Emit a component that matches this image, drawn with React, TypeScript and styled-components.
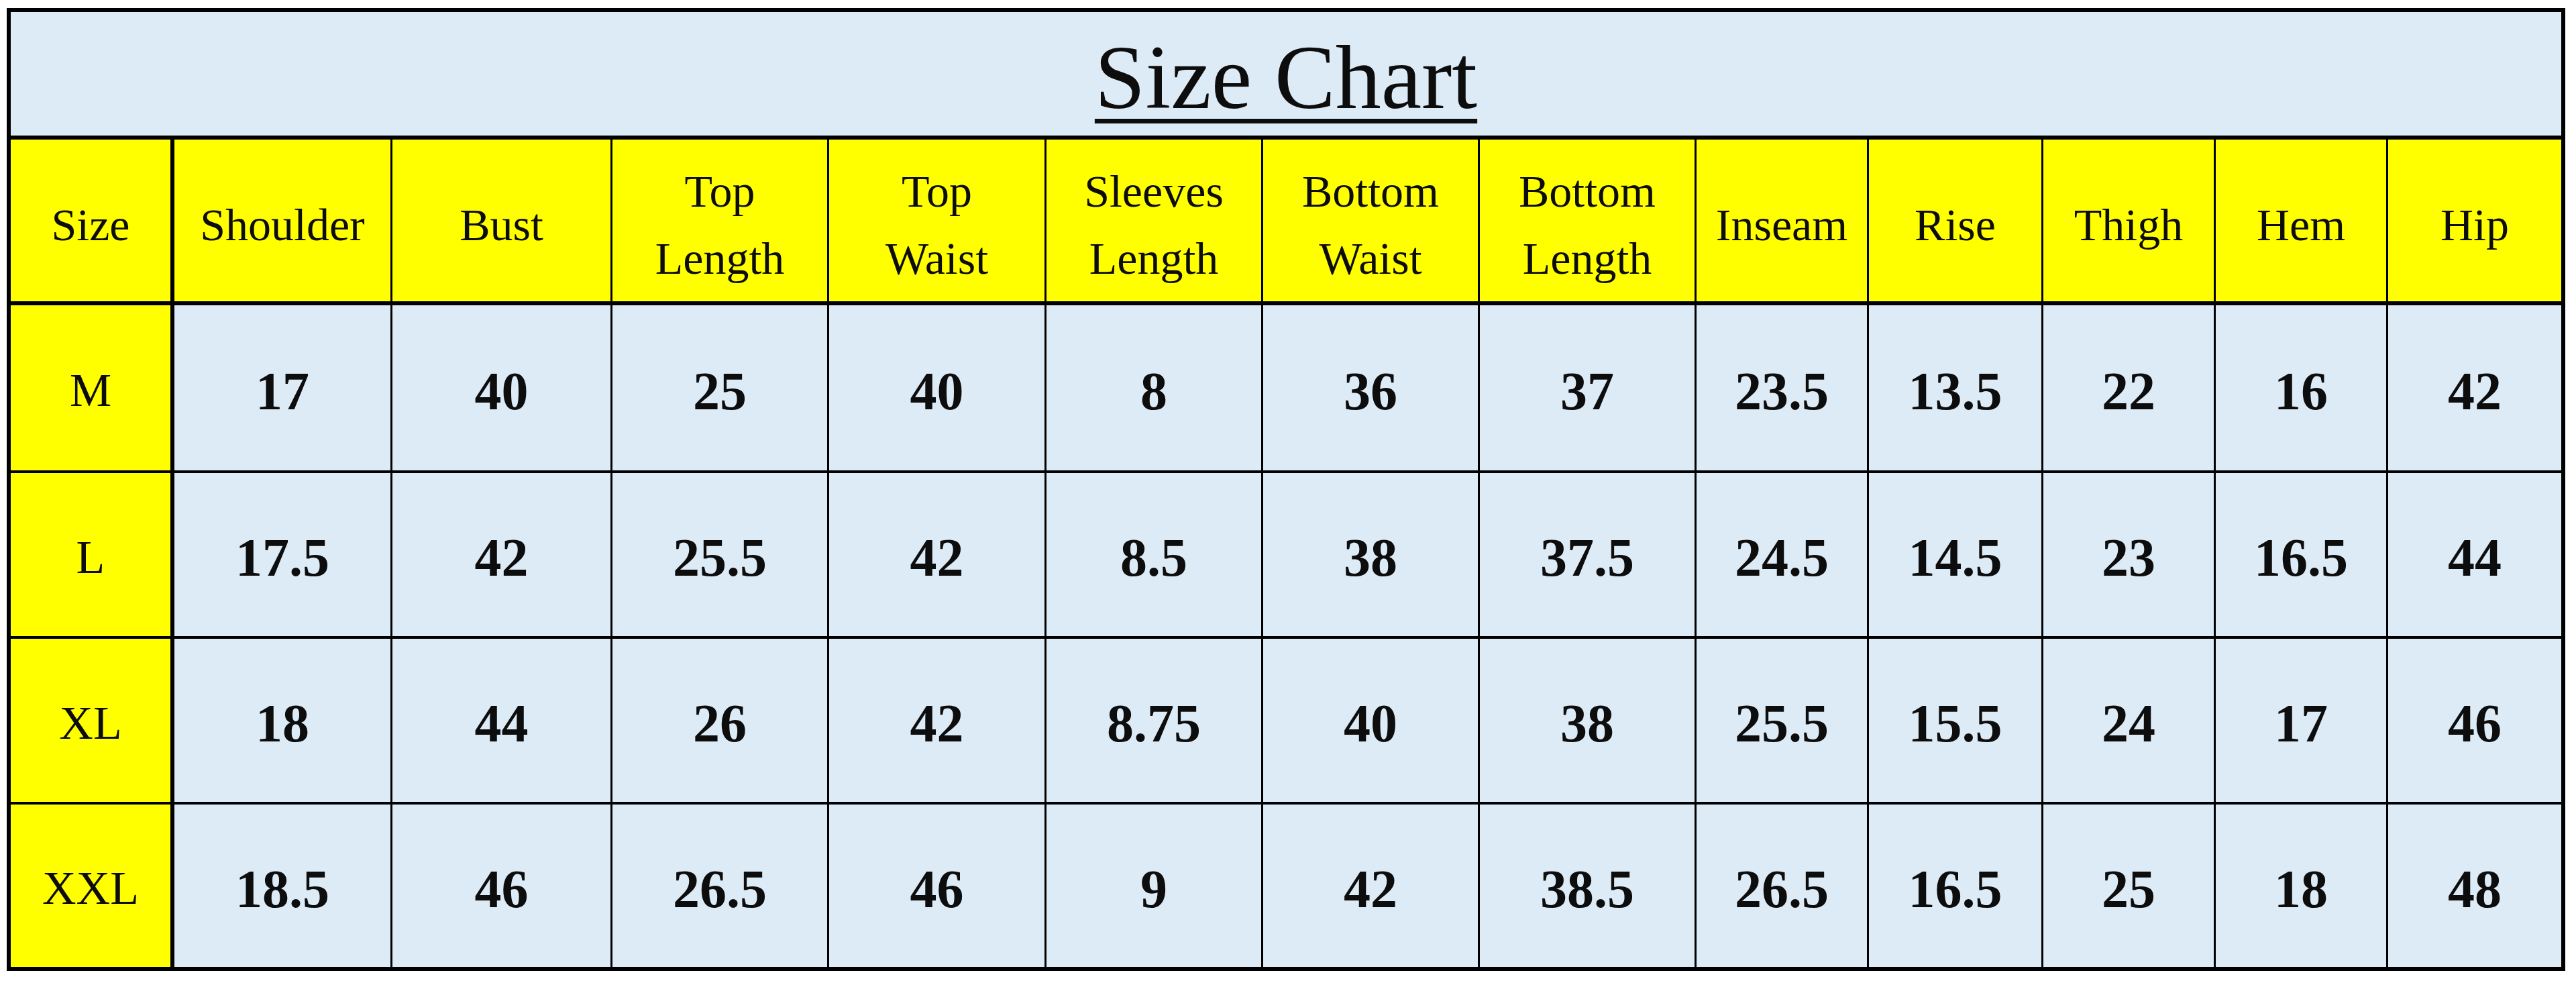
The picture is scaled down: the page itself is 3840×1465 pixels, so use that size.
import styled, { createGlobalStyle } from 'styled-components';

const COLUMNS = [244, 325, 328, 323, 324, 323, 323, 323, 257, 260, 257, 257, 258];
const ROWS = [190, 247, 250, 247, 247, 242];

const HEADERS: string[][] = [
  ['Size'],
  ['Shoulder'],
  ['Bust'],
  ['Top', 'Length'],
  ['Top', 'Waist'],
  ['Sleeves', 'Length'],
  ['Bottom', 'Waist'],
  ['Bottom', 'Length'],
  ['Inseam'],
  ['Rise'],
  ['Thigh'],
  ['Hem'],
  ['Hip'],
];

const SIZES: { size: string; values: string[] }[] = [
  { size: 'M', values: ['17', '40', '25', '40', '8', '36', '37', '23.5', '13.5', '22', '16', '42'] },
  { size: 'L', values: ['17.5', '42', '25.5', '42', '8.5', '38', '37.5', '24.5', '14.5', '23', '16.5', '44'] },
  { size: 'XL', values: ['18', '44', '26', '42', '8.75', '40', '38', '25.5', '15.5', '24', '17', '46'] },
  { size: 'XXL', values: ['18.5', '46', '26.5', '46', '9', '42', '38.5', '26.5', '16.5', '25', '18', '48'] },
];

function App() {
  return (
    <>
      <GlobalStyle />
      <Page>
        <Chart>
          <TitleCell>
            <Title>Size Chart</Title>
          </TitleCell>

          {HEADERS.map((lines, i) => (
            <HeadCell key={lines.join('-')} $first={i === 0} $last={i === HEADERS.length - 1}>
              <HeadText>
                {lines.map((line, j) => (
                  <span key={line}>
                    {j > 0 && <br />}
                    {line}
                  </span>
                ))}
              </HeadText>
            </HeadCell>
          ))}

          {SIZES.map((row, r) => {
            const lastRow = r === SIZES.length - 1;
            return [
              <SizeCell key={row.size} $lastRow={lastRow}>
                {row.size}
              </SizeCell>,
              ...row.values.map((value, c) => (
                <ValueCell
                  key={`${row.size}-${c}`}
                  $lastRow={lastRow}
                  $last={c === row.values.length - 1}
                >
                  {value}
                </ValueCell>
              )),
            ];
          })}
        </Chart>
      </Page>
    </>
  );
}

const GlobalStyle = createGlobalStyle`
  html, body {
    margin: 0;
    padding: 0;
    background: #ffffff;
  }

  body {
    font-family: "Liberation Serif", "Times New Roman", serif;
    color: #000;
  }
`;

const Page = styled.div`
  width: 3840px;
  height: 1465px;
  padding: 12px 0 0 10px;
  box-sizing: border-box;
  background: #ffffff;
`;

const Chart = styled.div`
  display: grid;
  grid-template-columns: ${COLUMNS.map((w) => `${w}px`).join(' ')};
  grid-template-rows: ${ROWS.map((h) => `${h}px`).join(' ')};
  width: 3814px;
  box-sizing: border-box;
  border: 6px solid #000;
  background: #ddebf7;
`;

const Cell = styled.div`
  box-sizing: border-box;
  display: flex;
  align-items: center;
  justify-content: center;
  text-align: center;
  color: #0d0d0d;
`;

const TitleCell = styled(Cell)`
  grid-column: 1 / -1;
  background: #ddebf7;
  border-bottom: 6px solid #000;
  padding-top: 10px;
`;

const Title = styled.h1`
  margin: 0;
  font-family: "Liberation Serif", "Times New Roman", serif;
  font-size: 136px;
  font-weight: 400;
  line-height: 1;
  text-decoration: underline;
  text-decoration-thickness: 7px;
  text-underline-offset: 16px;
`;

const HeadCell = styled(Cell)<{ $first?: boolean; $last?: boolean }>`
  background: #ffff00;
  border-bottom: 6px solid #000;
  border-right: ${(p) => (p.$last ? 'none' : p.$first ? '6px solid #000' : '3px solid #000')};
  padding-top: 12px;
`;

const HeadText = styled.div`
  font-size: 68px;
  line-height: 100px;
`;

const SizeCell = styled(Cell)<{ $lastRow?: boolean }>`
  background: #ffff00;
  border-right: 6px solid #000;
  border-bottom: ${(p) => (p.$lastRow ? 'none' : '4px solid #000')};
  font-size: 70px;
  padding-top: 8px;
`;

const ValueCell = styled(Cell)<{ $lastRow?: boolean; $last?: boolean }>`
  background: #ddebf7;
  border-right: ${(p) => (p.$last ? 'none' : '3px solid #000')};
  border-bottom: ${(p) => (p.$lastRow ? 'none' : '4px solid #000')};
  font-size: 80px;
  font-weight: 700;
  padding-top: 10px;
`;

export default App;
